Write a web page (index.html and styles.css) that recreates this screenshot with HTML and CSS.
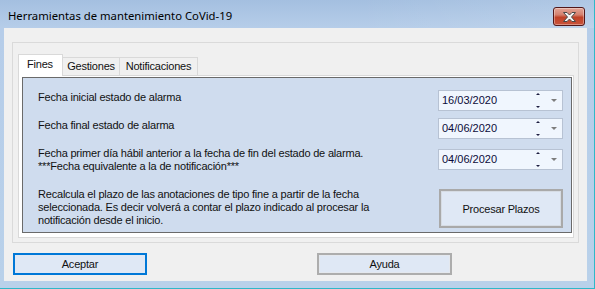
FILE: index.html
```html
<!DOCTYPE html>
<html lang="es">
  <head>
    <meta charset="utf-8" />
    <title>Herramientas de mantenimiento CoVid-19</title>
    <link rel="stylesheet" href="styles.css">
  </head>
  <body>
    <div class="window">
      <div class="titlebar">
        <span class="title">Herramientas de mantenimiento CoVid-19</span>
        <button class="close" type="button" aria-label="Cerrar">
          <svg width="15" height="10" viewBox="0 0 15 10">
            <path d="M1.5 0.5h3.5l2.5 2.5 2.5-2.5h3.5l-4 4.5 4 4.5h-3.5l-2.5-2.5-2.5 2.5h-3.5l4-4.5z" fill="#f4f4f4" stroke="#4a4a4a" stroke-width="1" stroke-linejoin="round"/>
          </svg>
        </button>
      </div>

      <div class="client">
        <div class="frame">
          <div class="tabs">
            <div class="tab-strip">
              <span class="tab active">Fines</span>
              <span class="tab tab-gest">Gestiones</span>
              <span class="tab tab-notif">Notificaciones</span>
            </div>
            <div class="tab-page">
              <div class="panel">
                <div class="row row-1">
                  <span class="label">Fecha inicial estado de alarma</span>
                  <div class="picker">
                    <span class="date">16/03/2020</span>
                    <span class="spin"><i class="up"></i><i class="down"></i></span>
                    <i class="drop"></i>
                  </div>
                </div>
                <div class="row row-2">
                  <span class="label">Fecha final estado de alarma</span>
                  <div class="picker">
                    <span class="date">04/06/2020</span>
                    <span class="spin"><i class="up"></i><i class="down"></i></span>
                    <i class="drop"></i>
                  </div>
                </div>
                <div class="row row-3">
                  <span class="label">Fecha primer día hábil anterior a la fecha de fin del estado de alarma.<br>***Fecha equivalente a la de notificación***</span>
                  <div class="picker">
                    <span class="date">04/06/2020</span>
                    <span class="spin"><i class="up"></i><i class="down"></i></span>
                    <i class="drop"></i>
                  </div>
                </div>
                <div class="row row-4">
                  <span class="label">Recalcula el plazo de las anotaciones de tipo fine a partir de la fecha<br>seleccionada. Es decir volverá a contar el plazo indicado al procesar la<br>notificación desde el inicio.</span>
                  <button class="btn btn-big" type="button">Procesar Plazos</button>
                </div>
              </div>
            </div>
          </div>
        </div>

        <div class="actions">
          <button class="btn btn-default" type="button">Aceptar</button>
          <button class="btn btn-help" type="button">Ayuda</button>
        </div>
      </div>
    </div>
  </body>
</html>
```

FILE: styles.css
```css
body{
  margin: 0;
  font-family: "Liberation Sans", Arial, sans-serif;
  font-size: 11px;
  letter-spacing: -0.2px;
  color: #111;
}

.window{
  width: 594px;
  height: 288px;
  display: flex;
  flex-direction: column;
  background: linear-gradient(to bottom, #a4bfe0 0, #b6cde9 28px, #b9d1ea 100%);
  border-right: 1px solid #2fb8c8;
  border-bottom: 1px solid #2fb8c8;
}

.titlebar{
  height: 28px;
  display: flex;
  align-items: flex-start;
  justify-content: space-between;
  background: linear-gradient(to right, rgba(255,255,255,0) 60%, rgba(255,255,255,0.12) 100%);
}

.title{
  font-family: "Noto Sans", "Open Sans", sans-serif;
  font-size: 11.3px;
  letter-spacing: 0;
  color: #000;
  margin: 7px 0 0 8px;
  line-height: 17px;
}

.close{
  width: 32px;
  height: 19px;
  margin: 7px 9px 0 0;
  padding: 0;
  border: 1px solid #52181a;
  border-radius: 3px;
  background: linear-gradient(to bottom, #e3a597 0, #d4806e 40%, #c04127 55%, #c9543c 100%);
  box-shadow: inset 0 0 0 1px rgba(255,255,255,0.35);
  display: flex;
  align-items: center;
  justify-content: center;
}

.client{
  flex: 1;
  margin: 0 7px 7px 4px;
  background-color: #f0f0f0;
  display: flex;
  flex-direction: column;
}

.frame{
  height: 201px;
  box-sizing: border-box;
  margin: 14px 8px 0 8px;
  border: 1px solid #dadada;
  padding: 12px 4px 4px 5px;
}

.tabs{
  display: flex;
  flex-direction: column;
  height: 100%;
}

.tab-strip{
  display: flex;
  align-items: flex-end;
  height: 20px;
}

.tab{
  box-sizing: border-box;
  height: 18px;
  padding-top: 2px;
  text-align: center;
  border: 1px solid #d9d9d9;
  border-bottom: none;
  background-color: #f0f0f0;
  margin-left: -1px;
}

.tab-gest{ width: 58px; }
.tab-notif{ width: 79px; }

.tab.active{
  position: relative;
  z-index: 1;
  width: 45px;
  height: 22px;
  margin-left: 0;
  margin-bottom: -1px;
  padding: 3px 0 0 8px;
  text-align: left;
  background-color: #fff;
}

.tab-page{
  flex: 1;
  border: 1px solid #d9d9d9;
  background-color: #fff;
  padding: 1px 1px 4px 3px;
  display: flex;
}

.panel{
  flex: 1;
  border: 1px solid #6a6a6a;
  background-color: #cfdcee;
  padding: 0 8px 0 15px;
}

.row{
  display: flex;
  justify-content: space-between;
  align-items: flex-start;
  line-height: 13px;
}

.row-1{ margin-top: 12px; }
.row-2{ margin-top: 7px; }
.row-3{ margin-top: 8px; }
.row-4{ margin-top: 15px; }

.row-3 .picker{ margin-top: 2px; }
.row-1 .label, .row-2 .label{ margin-top: 1px; }

.picker{
  box-sizing: border-box;
  width: 125px;
  height: 21px;
  border: 1px solid #b7c2d3;
  background-color: #f0f6fe;
  display: flex;
  align-items: center;
  padding-left: 3px;
  color: #0c0c3a;
  letter-spacing: 0;
}

.date{ flex: 1; }

.spin{
  width: 5px;
  height: 15px;
  display: flex;
  flex-direction: column;
  justify-content: space-between;
  align-items: center;
  margin-right: 11px;
}

.spin i{
  display: block;
  width: 0;
  height: 0;
  border-left: 2px solid transparent;
  border-right: 2px solid transparent;
}

.spin .up{ border-bottom: 2px solid #1d1d40; }
.spin .down{ border-top: 2px solid #1d1d40; }

.drop{
  display: block;
  width: 0;
  height: 0;
  margin-right: 5px;
  border-left: 3px solid transparent;
  border-right: 3px solid transparent;
  border-top: 3px solid #7d7d7d;
}

.btn{
  font-family: "Liberation Sans", Arial, sans-serif;
  font-size: 11px;
  letter-spacing: -0.2px;
  color: #111;
  box-sizing: border-box;
  background-color: #dfe8f5;
  border: 1px solid #adadad;
  padding: 0;
}

.btn-big{
  width: 124px;
  height: 39px;
  margin-top: 1px;
  border: 2px solid #a9a9a9;
  box-shadow: inset 0 0 0 1px #d6dce4;
}

.actions{
  display: flex;
  margin-top: 10px;
  padding-left: 9px;
}

.btn-default{
  width: 134px;
  height: 22px;
  border: 2px solid #0078d7;
}

.btn-help{
  width: 135px;
  height: 22px;
  margin-left: 170px;
  border: 2px solid #adadad;
  box-shadow: inset 0 0 0 1px #e4e8ee;
}
```
